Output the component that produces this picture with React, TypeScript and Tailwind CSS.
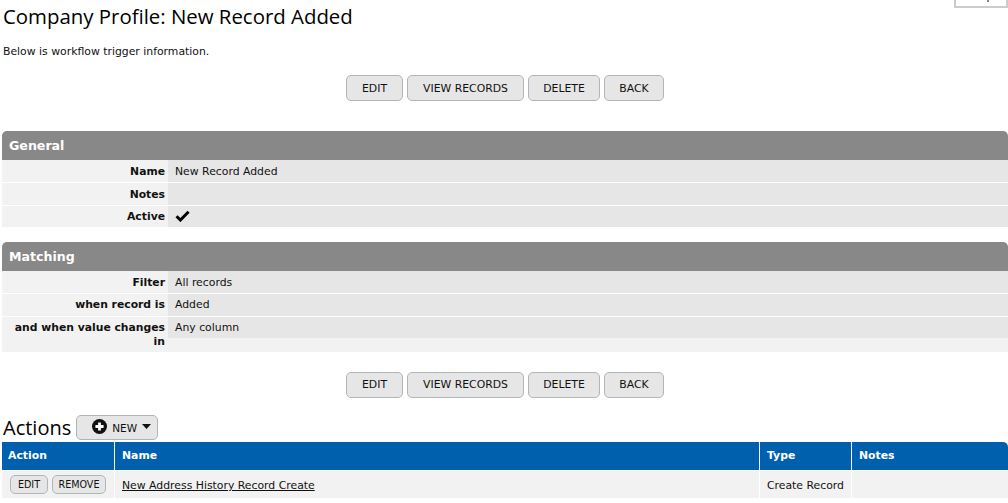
const font = "font-['DejaVu_Sans',Verdana,sans-serif]";

function Btn({ children, w, pt }: { children: React.ReactNode; w: string; pt: string }) {
  return (
    <button className={`${w} ${pt} h-[26px] rounded-[5px] border border-[#b0b6b8] bg-[#e6e6e6] text-[10.85px] leading-none text-[#111]`}>
      {children}
    </button>
  );
}

function ButtonBar({ pt = "pt-[1px]" }: { pt?: string }) {
  return (
    <div className="flex justify-center gap-[4px] pl-[2px]">
      <Btn pt={pt} w="w-[57px]">EDIT</Btn>
      <Btn pt={pt} w="w-[117px]">VIEW RECORDS</Btn>
      <Btn pt={pt} w="w-[72px]">DELETE</Btn>
      <Btn pt={pt} w="w-[60px]">BACK</Btn>
    </div>
  );
}

function Row({ label, children, h, gap = true, pt = "pt-[5px]" }: { label: React.ReactNode; children?: React.ReactNode; h: string; gap?: boolean; pt?: string }) {
  return (
    <div className={`grid grid-cols-[166px_1fr] ${gap ? "mb-[1px]" : ""} ${h} text-[10.85px] leading-[13px] text-[#111]`}>
      <div className={`bg-[#f2f2f2] pr-[3px] ${pt} text-right text-[10.8px] font-bold`}>{label}</div>
      <div className={`flex items-start bg-[#e6e6e6] pl-[7px] ${pt}`}>{children}</div>
    </div>
  );
}

function Section({ title, children }: { title: string; children: React.ReactNode }) {
  return (
    <section className="ml-[2px]">
      <div className="flex h-[29px] items-center rounded-t-[5px] bg-[#888888] pl-[7px] pt-[1px] text-[12.6px] font-bold text-white">{title}</div>
      {children}
    </section>
  );
}

export default function App() {
  return (
    <div className={`${font} relative h-[503px] w-[1008px] overflow-hidden bg-white text-[#111]`}>
      <div className="absolute right-0 top-[-14px] h-[22px] w-[54px] border-2 border-[#ccc] bg-white pt-[1px] text-center text-[11px]">Help</div>
      <h1 className="pl-[3px] pt-[3px] font-['Open_Sans',sans-serif] text-[20.4px] leading-[27px] text-black">Company Profile: New Record Added</h1>
      <p className="pl-[3px] pt-[15px] text-[10.85px] leading-[13px]">Below is workflow trigger information.</p>
      <div className="pt-[17px]"><ButtonBar pt="pt-[2px]" /></div>
      <div className="pt-[30px]">
        <Section title="General">
          <Row label="Name" h="h-[22px]">New Record Added</Row>
          <Row label="Notes" h="h-[22px]" />
          <Row label="Active" h="h-[21px]" gap={false} pt="pt-[4px]">
            <svg width="15" height="12" viewBox="0 0 15 12" aria-hidden="true">
              <path d="M1.5 6.2 5.4 10 13.6 1.8" fill="none" stroke="#000" strokeWidth="3" />
            </svg>
          </Row>
        </Section>
      </div>
      <div className="pt-[15px]">
        <Section title="Matching">
          <Row label="Filter" h="h-[22px]">All records</Row>
          <Row label="when record is" h="h-[22px]" pt="pt-[4px]">Added</Row>
          <div className="grid h-[35px] grid-cols-[166px_1fr] bg-[#f2f2f2] text-[10.85px] leading-[14px]">
            <div className="pr-[3px] pt-[4px] text-right text-[10.8px] font-bold">and when value changes in</div>
            <div className="h-[21px] bg-[#e6e6e6] pl-[7px] pt-[4px]">Any column</div>
          </div>
        </Section>
      </div>
      <div className="pt-[20px]"><ButtonBar /></div>
      <div className="flex items-center gap-[5px] pl-[3px] pt-[16px]">
        <h2 className="pt-[2px] font-['Open_Sans',sans-serif] text-[20px] leading-[24px] text-black">Actions</h2>
        <button className="flex h-[25px] w-[82px] items-center gap-[5px] rounded-[5px] border border-[#b0b6b8] bg-[#e6e6e6] pl-[15px] text-[10.5px]">
          <svg width="15" height="15" viewBox="0 0 14 14" className="mb-[1px]" aria-hidden="true">
            <circle cx="7" cy="7" r="7" fill="#111" />
            <path d="M7 3.2v7.6M3.2 7h7.6" stroke="#fff" strokeWidth="2.6" />
          </svg>
          <span className="pt-[3px]">NEW</span>
          <svg width="9" height="5" viewBox="0 0 9 5" className="mb-[1px]" aria-hidden="true">
            <path d="M0 0h9L4.5 5z" fill="#111" />
          </svg>
        </button>
      </div>
      <div className="ml-[2px] mt-[2px]">
        <div className="grid h-[28px] grid-cols-[113px_645px_92px_1fr] items-center rounded-tr-[5px] bg-[#0060ae] text-[10.85px] font-bold text-white">
          <div className="flex h-full items-center border-r border-white pl-[6px] pt-[1px]">Action</div>
          <div className="flex h-full items-center border-r border-white pl-[7px] pt-[1px]">Name</div>
          <div className="flex h-full items-center border-r border-white pl-[7px] pt-[1px]">Type</div>
          <div className="pl-[7px] pt-[1px]">Notes</div>
        </div>
        <div className="mt-[1px] grid h-[27px] grid-cols-[113px_645px_92px_1fr] items-center bg-[#f2f2f2] text-[10.85px]">
          <div className="flex h-full items-center gap-[4px] border-r border-white pl-[8px]">
            <button className="h-[19px] w-[38px] rounded-[5px] border border-[#b0b6b8] bg-[#e6e6e6] text-[9.6px] leading-none">EDIT</button>
            <button className="h-[19px] w-[54px] rounded-[5px] border border-[#b0b6b8] bg-[#e6e6e6] text-[9.6px] leading-none">REMOVE</button>
          </div>
          <div className="flex h-full items-center border-r border-white pl-[7px] pt-[3px]"><a className="underline">New Address History Record Create</a></div>
          <div className="flex h-full items-center border-r border-white pl-[7px] pt-[3px]">Create Record</div>
          <div />
        </div>
      </div>
    </div>
  );
}
